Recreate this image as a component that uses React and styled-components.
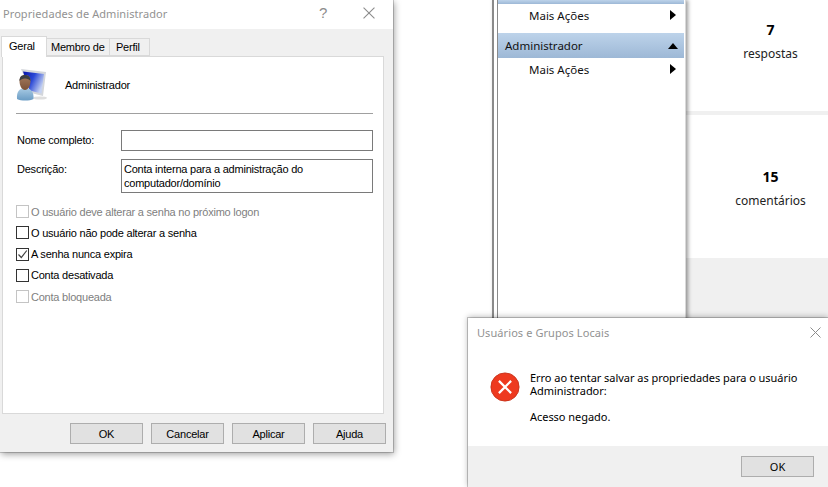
import React from "react";
import styled, { createGlobalStyle } from "styled-components";

const Global = createGlobalStyle`
  html, body { margin: 0; padding: 0; background: #fff; }
  body { font-family: "Noto Sans", "Liberation Sans", sans-serif; color: #000; }
  #root { width: 828px; height: 487px; overflow: hidden; }
`;

const Desktop = styled.div`
  position: relative;
  width: 828px;
  height: 487px;
  overflow: hidden;
  background: #fff;
`;

const Win = styled.section`
  position: absolute;
  display: flex;
  flex-direction: column;
  box-sizing: border-box;
  left: ${p => p.$x}px;
  top: ${p => p.$y}px;
  width: ${p => p.$w}px;
  height: ${p => p.$h}px;
  z-index: ${p => p.$z || 1};
`;

/* -------- background page -------- */
const ActionsWindow = styled(Win)`
  flex-direction: row;
  background: #fff;
  border-left: 2px solid #8a8a8a;
  border-right: 1px solid #d9d9d9;
  padding-left: 3px;
  box-shadow: 2px 0 4px rgba(0,0,0,.4);
`;
const ActionsInner = styled.div`
  flex: 1;
  display: flex;
  flex-direction: column;
  border-left: 1px solid #8a8a8a;
`;
const ActionHeader = styled.div`
  height: ${p => p.$h}px;
  box-sizing: border-box;
  display: flex;
  align-items: center;
  justify-content: space-between;
  margin-right: 1px;
  padding: 0 6px 0 7px;
  background: linear-gradient(#bdd3ea, #9db8d6);
  font-size: 11.5px;
  color: #111;
`;
const ActionRow = styled.div`
  height: 29px;
  box-sizing: border-box;
  padding: 0 9px 7px 31px;
  display: flex;
  align-items: center;
  justify-content: space-between;
  font-size: 11.5px;
  color: #111;
`;
const Page = styled(Win)`
  background: #f0f0f0;
  gap: 4px;
`;
const StatCard = styled.div`
  height: ${p => p.$h}px;
  background: #fff;
  display: flex;
  flex-direction: column;
  align-items: center;
  padding-top: ${p => p.$pt}px;
  box-sizing: border-box;
  padding-left: 27px;
`;
const StatValue = styled.b`
  font-size: 14px;
  line-height: 19px;
  font-weight: 700;
`;
const StatLabel = styled.span`
  font-size: 12px;
  line-height: 18px;
  margin-top: 6px;
  color: #222;
`;

/* -------- dialogs -------- */
const PropertiesDialog = styled(Win)`
  background: #f0f0f0;
  font-family: "Liberation Sans", sans-serif;
  letter-spacing: -.22px;
  box-shadow: 0 0 0 1px rgba(0,0,0,.18), 1px 2px 7px rgba(0,0,0,.4);
`;
const TitleBar = styled.header`
  height: 29px;
  box-sizing: border-box;
  flex: none;
  background: #fff;
  display: flex;
  align-items: center;
  padding: 0 ${p => p.$pr}px ${p => p.$pb}px ${p => p.$pl}px;
  gap: 36px;
`;
const Title = styled.span`
  flex: 1;
  font-family: "Noto Sans", sans-serif;
  font-size: 11px;
  letter-spacing: .08px;
  color: #929292;
`;
const Help = styled.span`
  font-family: "Liberation Sans", sans-serif;
  font-size: 15px;
  color: #8c8c8c;
  margin: -2px 0 0 1px;
`;
const TabStrip = styled.div`
  height: 27px;
  flex: none;
  display: flex;
  align-items: flex-end;
  padding-left: 1px;
  position: relative;
  z-index: 2;
`;
const Tab = styled.div`
  box-sizing: border-box;
  white-space: nowrap;
  width: ${p => p.$w}px;
  height: ${p => (p.$on ? 21 : 18)}px;
  margin-bottom: ${p => (p.$on ? -1 : 0)}px;
  background: ${p => (p.$on ? "#fff" : "#f0f0f0")};
  border: 1px solid #d9d9d9;
  border-bottom: ${p => (p.$on ? "none" : "1px solid #d9d9d9")};
  margin-left: ${p => (p.$on ? 0 : -1)}px;
  padding-left: ${p => p.$pl}px;
  padding-top: ${p => (p.$on ? 1 : 0)}px;
  font-size: 11px;
  line-height: 17px;
`;
const TabPanel = styled.div`
  width: 382px;
  height: 358px;
  margin-left: 2px;
  flex: none;
  box-sizing: border-box;
  background: #fff;
  border: 1px solid #d9d9d9;
  padding: 0 10px 0 13px;
  display: flex;
  flex-direction: column;
`;
const UserHead = styled.div`
  height: 56px;
  flex: none;
  display: flex;
  align-items: center;
  gap: 17px;
  border-bottom: 1px solid #a0a0a0;
`;
const Name = styled.span`
  font-size: 11px;
  margin-top: -1px;
`;
const FormRow = styled.div`
  display: flex;
  margin-top: ${p => p.$mt}px;
`;
const FieldLabel = styled.span`
  width: 104px;
  padding-left: 1px;
  flex: none;
  font-size: 11px;
  line-height: 17px;
  padding-top: 2px;
`;
const Field = styled.div`
  box-sizing: border-box;
  width: 252px;
  height: ${p => p.$h}px;
  border: 1px solid #7a7a7a;
  padding: 3px 2px 0;
  font-size: 11px;
  line-height: 13.500px;
  background: #fff;
`;
const CheckList = styled.div`
  display: flex;
  flex-direction: column;
  margin-top: 8px;
`;
const CheckRow = styled.div`
  height: 21.250px;
  display: flex;
  align-items: center;
  gap: 2px;
  font-size: 11px;
  color: ${p => (p.$off ? "#808080" : "#000")};
`;
const Box = styled.span`
  box-sizing: border-box;
  width: 13px;
  height: 13px;
  flex: none;
  border: 1px solid ${p => (p.$off ? "#c4c4c4" : "#333")};
  display: flex;
  align-items: center;
  justify-content: center;
  background: #fff;
`;
const ButtonRow = styled.div`
  display: flex;
  justify-content: flex-end;
  gap: 8px;
  padding: 9px 7px 0 0;
`;
const Button = styled.div`
  box-sizing: border-box;
  width: 73px;
  height: 21px;
  border: 1px solid #adadad;
  background: #e1e1e1;
  display: flex;
  align-items: center;
  justify-content: center;
  font-size: 11px;
`;
const ErrorDialog = styled(Win)`
  background: #fff;
  box-shadow: 0 0 0 1px rgba(0,0,0,.2), 0 -1px 6px rgba(0,0,0,.3);
`;
const ErrorBody = styled.div`
  height: 99px;
  flex: none;
  display: flex;
  gap: 10px;
  padding: 24px 0 0 22px;
  box-sizing: border-box;
`;
const IconSlot = styled.div`
  flex: none;
  width: 30px;
  height: 30px;
  margin-top: 1px;
`;
const Message = styled.div`
  font-size: 11px;
  line-height: 13px;
  letter-spacing: -.04px;
`;
const MsgLine = styled.p`
  margin: 0 0 13px;
`;
const ErrorFooter = styled.footer`
  flex: 1;
  background: #f0f0f0;
  display: flex;
  justify-content: flex-end;
  padding: 10px 14px 0 0;
`;

const Close = ({ size = 11 }) => (
  <svg width={size} height={size} viewBox="0 0 11 11" fill="none" stroke="#8c8c8c" strokeWidth="1">
    <path d="M.5.5l10 10M10.5.5l-10 10" />
  </svg>
);
const Right = () => (
  <svg width="6" height="10" viewBox="0 0 6 10"><path d="M0 0l6 5-6 5z" fill="#000" /></svg>
);
const Up = () => (
  <svg width="10" height="6" viewBox="0 0 10 6"><path d="M0 6l5-6 5 6z" fill="#000" /></svg>
);
const UserIcon = () => (
  <svg width="32" height="32" viewBox="0 0 32 32">
    <defs>
      <linearGradient id="scr" x1="0" y1="0" x2="1" y2=".5">
        <stop offset="0" stopColor="#0713a8" />
        <stop offset=".5" stopColor="#2a48d6" />
        <stop offset="1" stopColor="#c5d2f2" />
      </linearGradient>
      <linearGradient id="suit" x1="0" y1="0" x2="0" y2="1">
        <stop offset="0" stopColor="#a9cbe4" />
        <stop offset="1" stopColor="#6a9cc4" />
      </linearGradient>
      <linearGradient id="skin" x1="0" y1="0" x2="0" y2="1">
        <stop offset="0" stopColor="#a67c5e" />
        <stop offset="1" stopColor="#7b5238" />
      </linearGradient>
    </defs>
    <ellipse cx="24" cy="29" rx="7" ry="1.600" fill="#dedede" />
    <path d="M5 0l25 3-3 24-12-3z" fill="#d3d6db" />
    <path d="M7 2.500l21 2.500-2.500 19.500-12-3z" fill="url(#scr)" />
    <path d="M1 30c-.5-7 2-11 8-11s9 4 8.500 11c-4 2-12.500 2-16.500 0z" fill="url(#suit)" />
    <path d="M3.500 12c0-4 2-6 5.500-6s5.500 2 5.500 6c0 5-2.500 9-5.500 9s-5.500-4-5.500-9z" fill="url(#skin)" />
    <path d="M3.500 12c0-4 2-6 5.500-6s5.500 2 5.500 6c-1-1.600-3-2.500-5.500-2.500s-4.500 .9-5.500 2.500z" fill="#3c3f42" />
  </svg>
);
const ErrorIcon = () => (
  <svg width="30" height="30" viewBox="0 0 32 32">
    <circle cx="16" cy="16" r="15" fill="#ee3a1f" stroke="#c9331b" strokeWidth="1" />
    <path d="M9.500 9.500l13 13M22.500 9.500l-13 13" stroke="#fff" strokeWidth="2.400" />
  </svg>
);
const Check = () => (
  <svg width="11" height="11" viewBox="0 0 11 11" fill="none" stroke="#444" strokeWidth="1.200">
    <path d="M1.500 5.500l2.800 3 5.500-7" />
  </svg>
);

const checks = [
  { t: "O usuário deve alterar a senha no próximo logon", off: true },
  { t: "O usuário não pode alterar a senha" },
  { t: "A senha nunca expira", on: true },
  { t: "Conta desativada" },
  { t: "Conta bloqueada", off: true },
];

export default function App() {
  return (
    <Desktop>
      <Global />
      <Page $x={686} $y={0} $w={142} $h={320}>
        <StatCard $h={111} $pt={20}>
          <StatValue>7</StatValue>
          <StatLabel>respostas</StatLabel>
        </StatCard>
        <StatCard $h={143} $pt={52}>
          <StatValue>15</StatValue>
          <StatLabel>comentários</StatLabel>
        </StatCard>
      </Page>
      <ActionsWindow $x={492} $y={0} $w={194} $h={320} $z={2}>
        <ActionsInner>
          <ActionHeader $h={4} />
          <ActionRow>Mais Ações<Right /></ActionRow>
          <ActionHeader $h={25}>Administrador<Up /></ActionHeader>
          <ActionRow>Mais Ações<Right /></ActionRow>
        </ActionsInner>
      </ActionsWindow>

      <PropertiesDialog $x={0} $y={0} $w={393} $h={452} $z={3}>
        <TitleBar $pl={3} $pr={18} $pb={3}>
          <Title>Propriedades de Administrador</Title>
          <Help>?</Help>
          <Close size={12} />
        </TitleBar>
        <TabStrip>
          <Tab $on $w={46} $pl={7}>Geral</Tab>
          <Tab $w={64} $pl={4}>Membro de</Tab>
          <Tab $w={41} $pl={6}>Perfil</Tab>
        </TabStrip>
        <TabPanel>
          <UserHead>
            <UserIcon />
            <Name>Administrador</Name>
          </UserHead>
          <FormRow $mt={16}>
            <FieldLabel>Nome completo:</FieldLabel>
            <Field $h={21} />
          </FormRow>
          <FormRow $mt={8}>
            <FieldLabel>Descrição:</FieldLabel>
            <Field $h={34}>Conta interna para a administração do computador/domínio</Field>
          </FormRow>
          <CheckList>
            {checks.map(c => (
              <CheckRow key={c.t} $off={c.off}>
                <Box $off={c.off}>{c.on && <Check />}</Box>
                {c.t}
              </CheckRow>
            ))}
          </CheckList>
        </TabPanel>
        <ButtonRow>
          <Button>OK</Button>
          <Button>Cancelar</Button>
          <Button>Aplicar</Button>
          <Button>Ajuda</Button>
        </ButtonRow>
      </PropertiesDialog>

      <ErrorDialog $x={468} $y={318} $w={360} $h={169} $z={4}>
        <TitleBar $pl={9} $pr={7} $pb={1}>
          <Title>Usuários e Grupos Locais</Title>
          <Close />
        </TitleBar>
        <ErrorBody>
          <IconSlot><ErrorIcon /></IconSlot>
          <Message>
            <MsgLine>Erro ao tentar salvar as propriedades para o usuário<br />Administrador:</MsgLine>
            <MsgLine>Acesso negado.</MsgLine>
          </Message>
        </ErrorBody>
        <ErrorFooter>
          <Button>OK</Button>
        </ErrorFooter>
      </ErrorDialog>
    </Desktop>
  );
}
